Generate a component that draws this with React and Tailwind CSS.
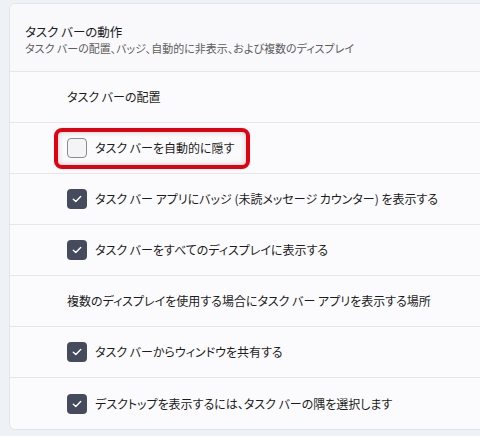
import React from 'react'

function Check({ checked }) {
    if (!checked) {
        return <div className="w-[20px] h-[20px] shrink-0 rounded-[4px] border border-[#8b8b8b] bg-[#f4f4f6]" />
    }
    return (
        <div className="w-[20px] h-[20px] shrink-0 rounded-[4px] bg-[#454b5c] flex items-center justify-center">
            <svg width="12" height="12" viewBox="0 0 12 12" fill="none">
                <path d="M2.3 6.3 L4.8 8.6 L9.7 3.6" stroke="#ffffff" strokeWidth="1.4" strokeLinecap="round" strokeLinejoin="round" />
            </svg>
        </div>
    )
}

function Row({ children, last }) {
    return (
        <div className={`h-[51px] flex items-center pl-[57px] ${last ? '' : 'border-b border-[#e6e6e8]'}`}>
            {children}
        </div>
    )
}

function Option({ checked, label }) {
    return (
        <div className="flex items-center gap-[8px]">
            <Check checked={checked} />
            <span>{label}</span>
        </div>
    )
}

export default function App() {
    return (
        <div className="w-[480px] h-[436px] bg-[#eef1f6] pt-[3px] pl-[9px] overflow-hidden text-[12px] text-[#1b1b1b] [font-family:'Noto_Sans_CJK_JP',sans-serif] [font-feature-settings:'palt']">
            <div className="w-[480px] rounded-l-[6px] border border-[#e3e4e8] bg-[#fbfbfd] overflow-hidden">
                <div className="h-[68px] flex flex-col justify-center pt-[4px] pl-[15px] border-b border-[#e6e6e8] bg-[#f9f9fb]">
                    <div className="text-[12.5px] leading-[16px]">タスク バーの動作</div>
                    <div className="text-[11px] leading-[16px] text-[#5d5d5d]">タスク バーの配置、バッジ、自動的に非表示、および複数のディスプレイ</div>
                </div>
                <Row>
                    <span>タスク バーの配置</span>
                </Row>
                <Row>
                    <div className="-ml-[13px] h-[41px] w-[196px] rounded-[8px] border-[4px] border-[#e3000f] shadow-[inset_0_0_6px_rgba(0,0,0,0.18)] flex items-center pl-[9px] gap-[8px]">
                        <Check checked={false} />
                        <span>タスク バーを自動的に隠す</span>
                    </div>
                </Row>
                <Row>
                    <Option checked label="タスク バー アプリにバッジ (未読メッセージ カウンター) を表示する" />
                </Row>
                <Row>
                    <Option checked label="タスク バーをすべてのディスプレイに表示する" />
                </Row>
                <Row>
                    <span>複数のディスプレイを使用する場合にタスク バー アプリを表示する場所</span>
                </Row>
                <Row>
                    <Option checked label="タスク バーからウィンドウを共有する" />
                </Row>
                <Row last>
                    <Option checked label="デスクトップを表示するには、タスク バーの隅を選択します" />
                </Row>
            </div>
        </div>
    )
}
